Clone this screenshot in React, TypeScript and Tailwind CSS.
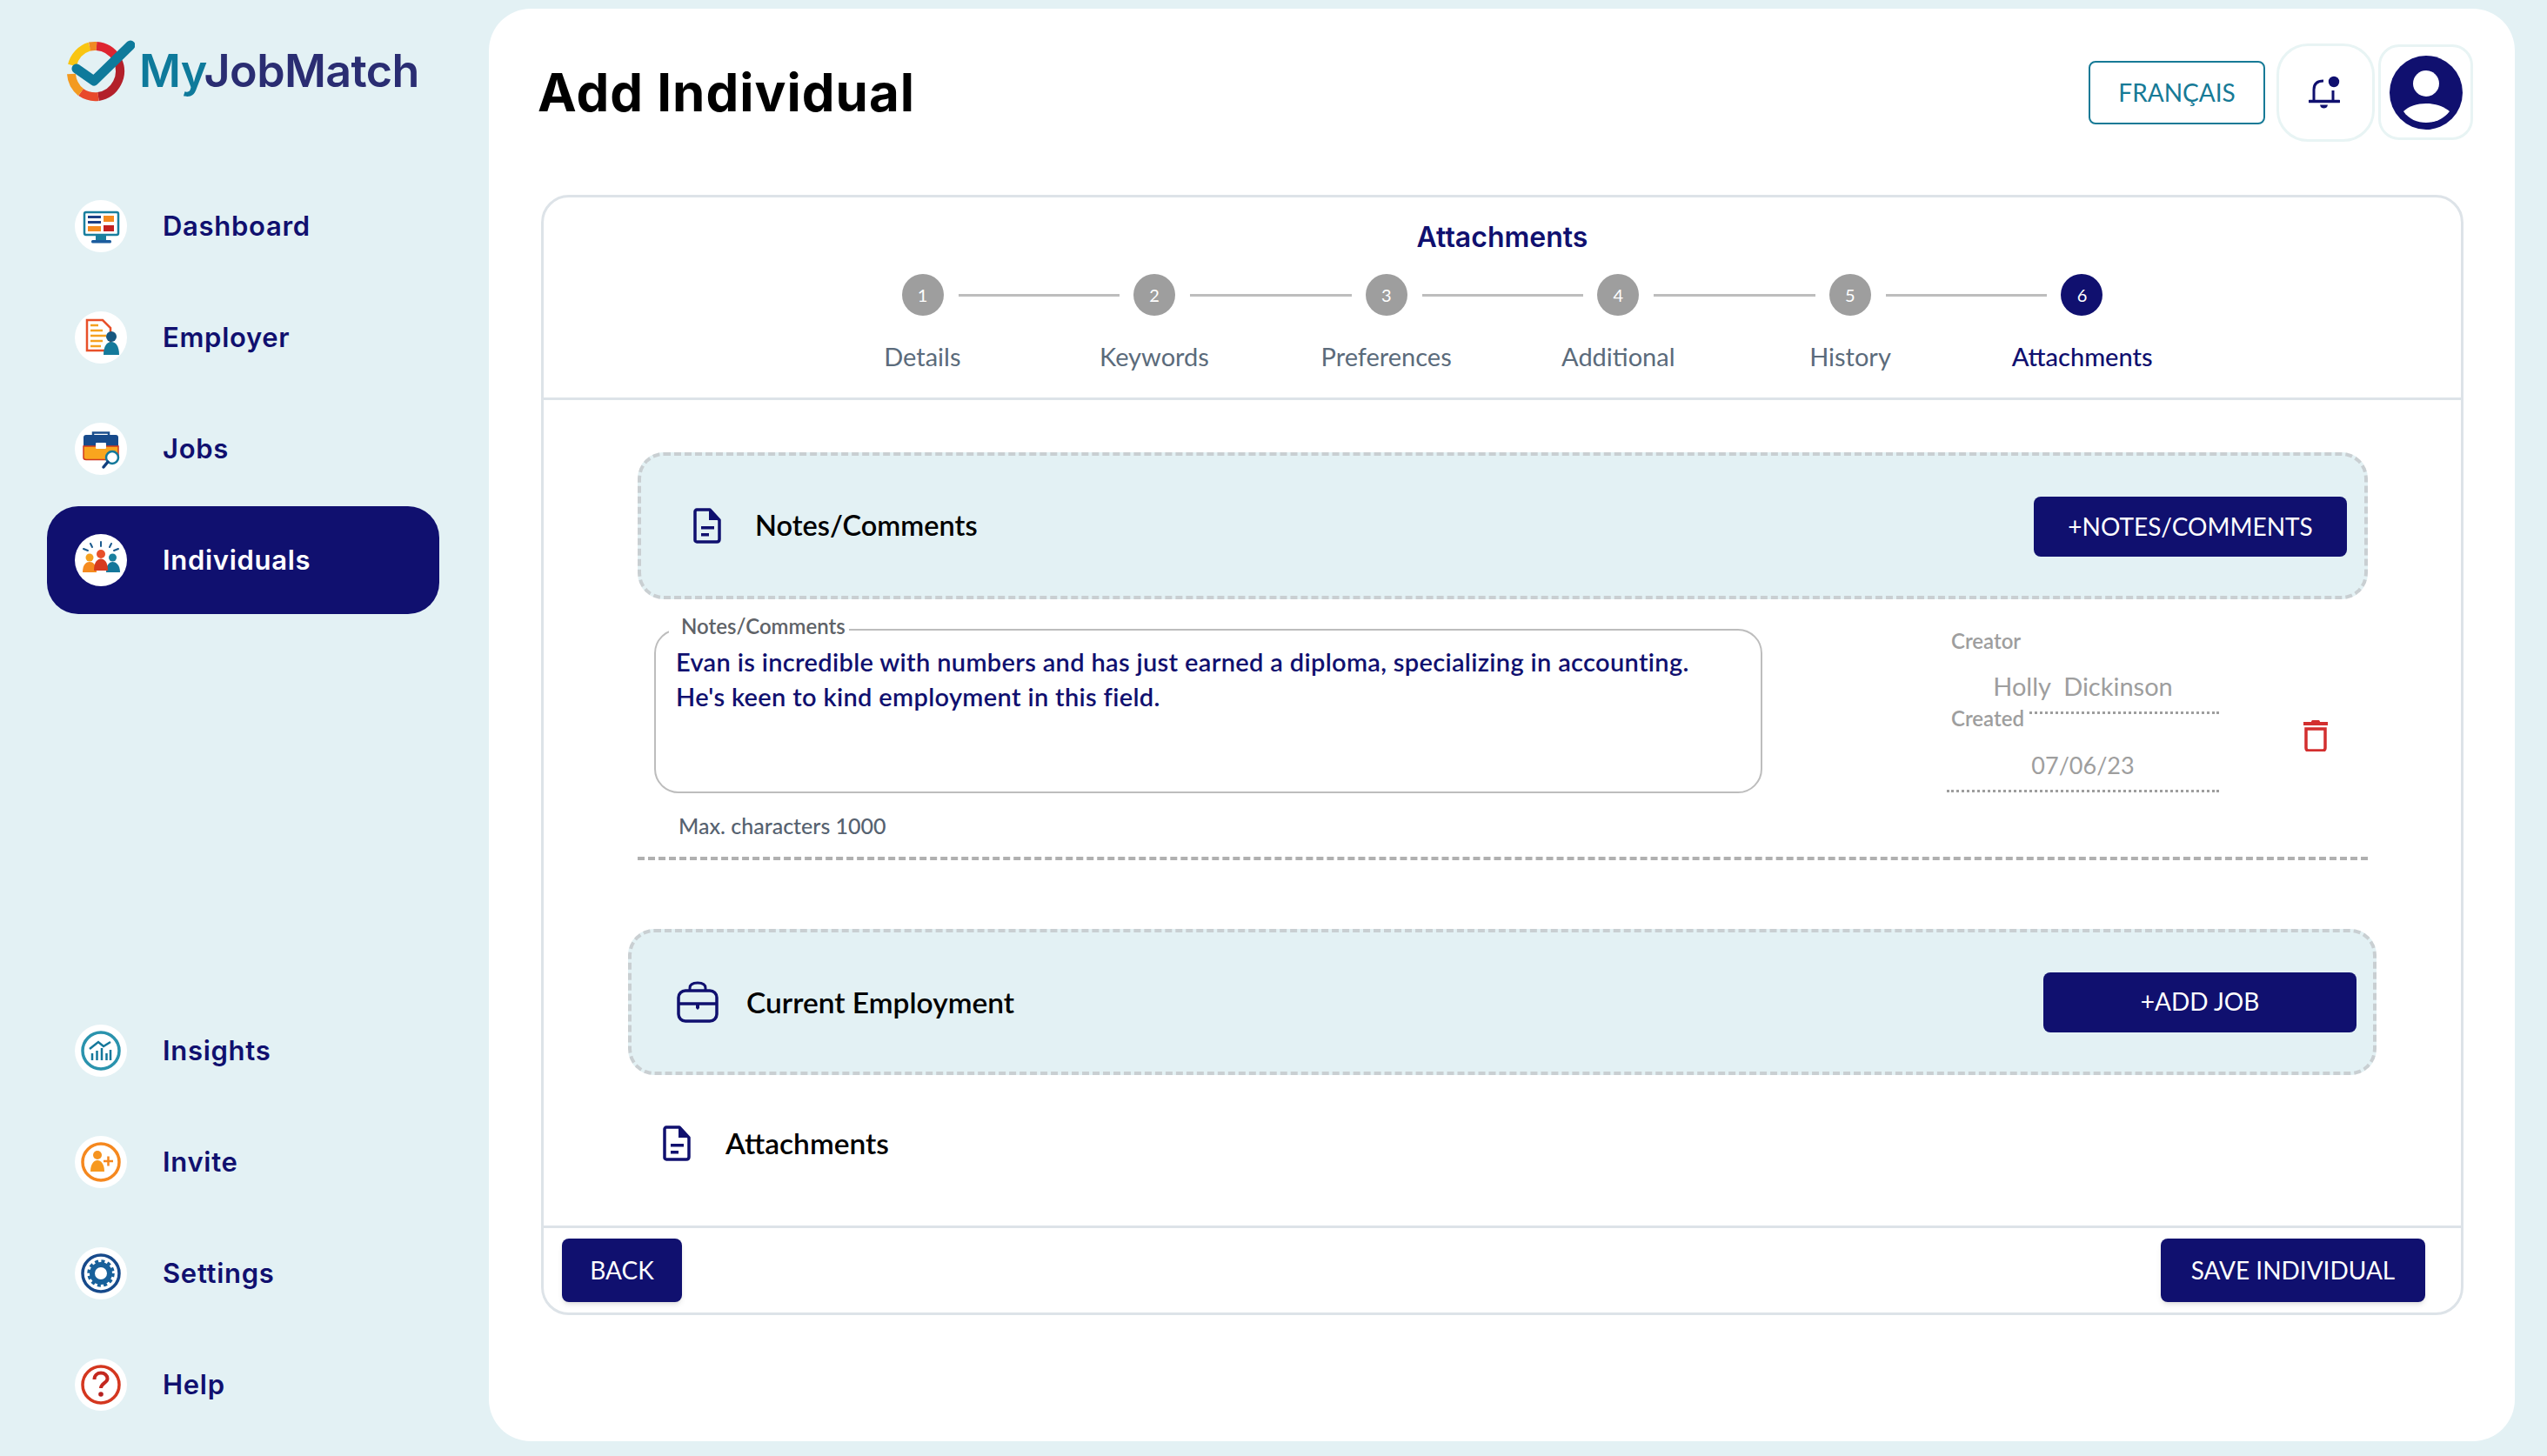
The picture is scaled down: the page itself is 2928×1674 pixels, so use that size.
import type { ReactNode } from "react";

const headFont = "font-['Inter',sans-serif]";

function DashboardIcon() {
  return (
    <svg viewBox="0 0 60 60" className="w-[60px] h-[60px]">
      <rect x="11" y="14" width="39" height="26" rx="2" fill="#fff" stroke="#1a7f9e" strokeWidth="2.5" />
      <rect x="15" y="18" width="15" height="3" fill="#1c3f86" />
      <rect x="15" y="24" width="15" height="3" fill="#1c3f86" />
      <rect x="33" y="18" width="12" height="7" fill="#f58a1f" />
      <rect x="15" y="30" width="15" height="6" fill="#f58a1f" />
      <rect x="33" y="29" width="12" height="7" fill="#c4201f" />
      <rect x="24" y="40" width="12" height="6" fill="#1a7f9e" />
      <rect x="19" y="46" width="23" height="3.5" rx="1.5" fill="#1c5c9e" />
    </svg>
  );
}

function EmployerIcon() {
  return (
    <svg viewBox="0 0 60 60" className="w-[60px] h-[60px]">
      <path d="M14 10H32L41 19V45H14Z" fill="#fff" stroke="#e8502a" strokeWidth="2.5" />
      <path d="M18 16H27M18 22H32M18 28H36M18 34H32M18 40H30" stroke="#f5a11f" strokeWidth="2.5" />
      <circle cx="42" cy="29" r="6" fill="#17577f" />
      <path d="M33 50C33 40 37 35 42 35C47 35 51 40 51 50Z" fill="#147a9b" />
    </svg>
  );
}

function JobsIcon() {
  return (
    <svg viewBox="0 0 60 60" className="w-[60px] h-[60px]">
      <path d="M21 14V11.5H39V14" fill="none" stroke="#1c4f8e" strokeWidth="2.5" />
      <path d="M10 17C10 15 11 14 13 14H47C49 14 50 15 50 17V27H10Z" fill="#174a8b" />
      <path d="M10 27H50V40C50 41.5 49 42.5 47 42.5H13C11 42.5 10 41.5 10 40Z" fill="#f9a51e" stroke="#d0391f" strokeWidth="1.5" />
      <rect x="24" y="23" width="12" height="7" rx="1" fill="#fff" />
      <circle cx="43" cy="40" r="7" fill="#fff" stroke="#12789a" strokeWidth="2.5" />
      <path d="M38 45L33 51" stroke="#123f7e" strokeWidth="3.5" strokeLinecap="round" />
    </svg>
  );
}

function IndividualsIcon() {
  return (
    <svg viewBox="0 0 60 60" className="w-[60px] h-[60px]">
      <path d="M30 9V14M18 11L20 15M42 11L40 15M10 17L15 19M50 17L45 19" stroke="#1a5a8e" strokeWidth="2" strokeLinecap="round" />
      <circle cx="17" cy="27" r="4.5" fill="#f5a11f" />
      <path d="M9 44C9 35 13 32 17 32C21 32 25 35 25 44Z" fill="#f58a1f" />
      <circle cx="43.5" cy="27" r="4.5" fill="#1a7f9e" />
      <path d="M36 44C36 35 40 32 43.5 32C47 32 52 35 52 44Z" fill="#14779a" />
      <circle cx="30" cy="23" r="5" fill="#e8502a" />
      <path d="M22 42C22 32 26 28.5 30 28.5C34 28.5 38 32 38 42Z" fill="#d63a1f" />
    </svg>
  );
}

function InsightsIcon() {
  return (
    <svg viewBox="0 0 60 60" className="w-[60px] h-[60px]">
      <circle cx="30" cy="30" r="21" fill="none" stroke="#2a93ad" strokeWidth="3.5" />
      <path d="M17 28L27 20L33 25L41 20" fill="none" stroke="#14779a" strokeWidth="2.5" />
      <path d="M20 33V41M25.5 30V41M31 27V41M36.5 33V41M41 29V41" stroke="#14779a" strokeWidth="2.5" />
    </svg>
  );
}

function InviteIcon() {
  return (
    <svg viewBox="0 0 60 60" className="w-[60px] h-[60px]">
      <circle cx="30" cy="30" r="21" fill="none" stroke="#f5881f" strokeWidth="3.5" />
      <circle cx="26" cy="22" r="5" fill="#f5931f" />
      <path d="M18 41C18 32 22 28 26 28C30 28 34 32 34 41Z" fill="#f7991f" />
      <path d="M33 29H44M38.5 23.5V34.5" stroke="#f5881f" strokeWidth="2.5" />
    </svg>
  );
}

function SettingsIcon() {
  return (
    <svg viewBox="0 0 60 60" className="w-[60px] h-[60px]">
      <circle cx="30" cy="30" r="21" fill="none" stroke="#174a8b" strokeWidth="3.5" />
      <circle cx="30" cy="30" r="10" fill="none" stroke="#17609a" strokeWidth="6" />
      <circle cx="30" cy="30" r="14" fill="none" stroke="#17609a" strokeWidth="3.5" strokeDasharray="4 3.33" />
    </svg>
  );
}

function HelpIcon() {
  return (
    <svg viewBox="0 0 60 60" className="w-[60px] h-[60px]">
      <circle cx="30" cy="30" r="21" fill="none" stroke="#d4371f" strokeWidth="3.5" />
      <path d="M22.5 24C22.5 19 26 16.5 30 16.5C34.5 16.5 37.5 19.5 37.5 23C37.5 28 30 28.5 30 34" fill="none" stroke="#c4281f" strokeWidth="4" />
      <circle cx="30" cy="41" r="2.8" fill="#b5201f" />
    </svg>
  );
}

function Logo() {
  return (
    <svg viewBox="0 0 80 72" className="w-[80px] h-[72px] shrink-0">
      <g fill="none" strokeWidth="10" transform="translate(2 1)">
        <path d="M6 28A29.5 29.5 0 0 1 26 6.5" stroke="#f9c512" />
        <path d="M26 6.5A29.5 29.5 0 0 1 34 6" stroke="#f08a24" />
        <path d="M34 6A29.5 29.5 0 0 1 57 20" stroke="#de2530" />
        <path d="M58 22A29.5 29.5 0 0 1 36 64" stroke="#b3202a" />
        <path d="M36 64A29.5 29.5 0 0 1 16 59" stroke="#e8492b" />
        <path d="M16 59A29.5 29.5 0 0 1 5 38" stroke="#f39a21" />
      </g>
      <path d="M13 33L33 47L75 6" fill="none" stroke="#0e7a9b" strokeWidth="11" strokeLinecap="round" strokeLinejoin="round" />
    </svg>
  );
}

function DocIcon({ className }: { className: string }) {
  return (
    <svg viewBox="0 0 32 41" className={className}>
      <path d="M4 2H19L30 14V36C30 38 29 39 27 39H4C3 39 2 38 2 37V4C2 3 3 2 4 2Z" fill="none" stroke="#10106f" strokeWidth="3.5" strokeLinejoin="round" />
      <path d="M18 2L30 14H18Z" fill="#10106f" />
      <rect x="9" y="21" width="15" height="3.5" fill="#10106f" />
      <rect x="9" y="29" width="9" height="3.5" fill="#10106f" />
    </svg>
  );
}

function BriefcaseIcon() {
  return (
    <svg viewBox="0 0 48 48" className="w-[48px] h-[48px] shrink-0">
      <path d="M15 11V8C15 4 18 2 24 2C30 2 33 4 33 8V11" fill="none" stroke="#10106f" strokeWidth="3" />
      <rect x="2" y="11" width="44" height="35" rx="8" fill="none" stroke="#10106f" strokeWidth="3.5" />
      <path d="M2 26H46" stroke="#10106f" strokeWidth="3.5" />
      <path d="M22 26H26V31L24 33L22 31Z" fill="#10106f" />
    </svg>
  );
}

function BellIcon() {
  return (
    <svg viewBox="0 0 36 38" className="w-[36px] h-[38px]">
      <path d="M6 28V16C6 9 10 6 17 6" fill="none" stroke="#10106f" strokeWidth="3" />
      <path d="M28 17V28" fill="none" stroke="#10106f" strokeWidth="3" />
      <path d="M1 29.5H35" stroke="#10106f" strokeWidth="3.5" strokeLinecap="round" />
      <path d="M13 33.5H22C21.5 36.5 19.5 37.5 17.5 37.5C15.5 37.5 13.5 36.5 13 33.5Z" fill="#10106f" />
      <circle cx="29" cy="7" r="6.2" fill="#10106f" />
    </svg>
  );
}

function AvatarIcon() {
  return (
    <svg viewBox="0 0 84 85" className="w-[84px] h-[85px]">
      <ellipse cx="42" cy="42.5" rx="42" ry="42.5" fill="#10106f" />
      <circle cx="42" cy="32" r="15" fill="#fff" />
      <path d="M16 64C22 58 32 55 42 55C52 55 62 58 69 64C62 73 52 77 42 77C32 77 22 73 16 64Z" fill="#fff" />
    </svg>
  );
}

function TrashIcon() {
  return (
    <svg viewBox="0 0 28 37" className="w-[28px] h-[37px]">
      <path d="M9 3C9 1.5 10 1 11 1H17C18 1 19 1.5 19 3H28V7H0V3Z" fill="#d32f2f" />
      <path d="M3 11H25V33C25 35 24 36 22 36H6C4 36 3 35 3 33Z" fill="none" stroke="#d32f2f" strokeWidth="3.5" />
    </svg>
  );
}

function NavItem({ icon, label, active }: { icon: ReactNode; label: string; active?: boolean }) {
  return (
    <div
      className={
        active
          ? "flex items-center h-[124px] w-[451px] pl-[32px] gap-[41px] rounded-[36px] bg-[#10106f] text-white"
          : "flex items-center h-[124px] w-[451px] pl-[32px] gap-[41px] text-[#10106f]"
      }
    >
      <span className="flex items-center justify-center w-[60px] h-[60px] rounded-full bg-white shrink-0">{icon}</span>
      <span className={`${headFont} text-[31px] font-semibold tracking-[0.7px]`}>{label}</span>
    </div>
  );
}

const steps = ["Details", "Keywords", "Preferences", "Additional", "History", "Attachments"];

function Stepper() {
  return (
    <div className="flex flex-col items-center">
      <div className="flex items-center">
        {steps.map((s, i) => (
          <div key={s} className="flex items-center">
            <div
              className={
                i === 5
                  ? "flex items-center justify-center w-[48px] h-[48px] rounded-full bg-[#10106f] text-white text-[20px]"
                  : "flex items-center justify-center w-[48px] h-[48px] rounded-full bg-[#9e9e9e] text-white text-[20px]"
              }
            >
              {i + 1}
            </div>
            {i < 5 && <div className="w-[185.6px] h-[3px] ml-[17px] mr-[16px] bg-[#bdbdbd]" />}
          </div>
        ))}
      </div>
      <div className="grid grid-cols-6 w-[1600px] mt-[27px]">
        {steps.map((s, i) => (
          <div
            key={s}
            className={
              i === 5
                ? "text-center text-[29px] leading-[40px] font-medium text-[#10106f]"
                : "text-center text-[29px] leading-[40px] text-[#5b6b7b]"
            }
          >
            {s}
          </div>
        ))}
      </div>
    </div>
  );
}

function PrimaryButton({ label, className }: { label: string; className: string }) {
  return (
    <button className={`flex items-center justify-center pb-[2px] bg-[#10106f] text-white text-[28px] ${className}`}>{label}</button>
  );
}

export default function App() {
  return (
    <div className="flex w-[2928px] h-[1674px] bg-[#e3f1f4] font-['Lato',sans-serif] overflow-hidden">
      <aside className="flex flex-col w-[562px] shrink-0 pl-[54px] pb-[20px]">
        <div className="flex items-center gap-[5px] h-[72px] mt-[46px] ml-[21px]">
          <Logo />
          <span className={`${headFont} text-[52px] font-semibold tracking-[-0.6px] leading-none text-[#2a2d72]`}>
            <span className="text-[#0e7a9b]">My</span>JobMatch
          </span>
        </div>
        <nav className="flex flex-col gap-[4px] mt-[80px]">
          <NavItem icon={<DashboardIcon />} label="Dashboard" />
          <NavItem icon={<EmployerIcon />} label="Employer" />
          <NavItem icon={<JobsIcon />} label="Jobs" />
          <NavItem icon={<IndividualsIcon />} label="Individuals" active />
        </nav>
        <nav className="flex flex-col gap-[4px] mt-auto">
          <NavItem icon={<InsightsIcon />} label="Insights" />
          <NavItem icon={<InviteIcon />} label="Invite" />
          <NavItem icon={<SettingsIcon />} label="Settings" />
          <NavItem icon={<HelpIcon />} label="Help" />
        </nav>
      </aside>

      <main className="flex flex-col w-[2329px] h-[1647px] mt-[10px] rounded-[48px] bg-white pl-[60px] pr-[59px]">
        <header className="flex items-center justify-between h-[192px] mb-[22px] -ml-[4px] -mr-[11px]">
          <h1 className={`${headFont} text-[60px] font-bold text-black tracking-[1px]`}>Add Individual</h1>
          <div className="flex items-center">
            <button className="flex items-center justify-center w-[203px] h-[73px] rounded-[8px] border-2 border-[#167a96] text-[#167a96] text-[28px]">
              FRANÇAIS
            </button>
            <div className="flex items-center justify-center w-[113px] h-[113px] ml-[13px] pr-[4px] rounded-[36px] border-[3px] border-[#e8f4f4]">
              <BellIcon />
            </div>
            <div className="flex items-center justify-center w-[109px] h-[110px] ml-[4px] rounded-[24px] border-[3px] border-[#e8f4f4]">
              <AvatarIcon />
            </div>
          </div>
        </header>

        <section className="flex flex-col h-[1288px] rounded-[32px] border-[3px] border-[#dde3e8]">
          <div className="flex flex-col items-center h-[233px] pt-[26px] border-b-[3px] border-[#dde3e8]">
            <h2 className={`${headFont} text-[32px] leading-[40px] font-semibold text-[#10106f]`}>Attachments</h2>
            <div className="mt-[22px]">
              <Stepper />
            </div>
          </div>

          <div className="flex flex-col flex-1">
            <div className="flex items-center justify-between h-[169px] ml-[108px] mr-[107px] mt-[60px] pl-[60px] pr-[20px] rounded-[30px] border-4 border-dashed border-[#c9cfd2] bg-[#e3f1f4]">
              <div className="flex items-center gap-[39px]">
                <DocIcon className="w-[32px] h-[41px] shrink-0" />
                <span className="text-[32.5px] font-semibold text-black">Notes/Comments</span>
              </div>
              <PrimaryButton label="+NOTES/COMMENTS" className="w-[360px] h-[69px] mt-[2px] rounded-[8px]" />
            </div>

            <div className="flex h-[296px] pl-[127px]">
              <div className="w-[1274px] pt-[21px]">
                <fieldset className="h-[202px] rounded-[28px] border-[2.5px] border-[#bdbdbd] pl-[23px]">
                  <legend className="-ml-[8px] pl-[14px] pr-[4px] -translate-y-[4px] text-[24px] leading-[28px] font-semibold text-[#5f6368]">Notes/Comments</legend>
                  <p className="pt-[3px] text-[29px] tracking-[0.33px] leading-[40px] font-semibold text-[#10106f]">
                    Evan is incredible with numbers and has just earned a diploma, specializing in accounting.
                    <br />
                    He's keen to kind employment in this field.
                  </p>
                </fieldset>
                <p className="ml-[28px] mt-[21px] text-[25px] leading-[32px] font-medium text-[#566270]">Max. characters 1000</p>
              </div>
              <div className="w-[313px] ml-[212px] pt-[34px] text-[#9e9e9e]">
                <div className="h-[98px] border-b-[3px] border-dotted border-[#9e9e9e]">
                  <p className="pl-[5px] text-[24px] leading-[28px] font-semibold">Creator</p>
                  <p className="mt-[20px] text-center text-[29px] leading-[36px]">Holly&nbsp; Dickinson</p>
                </div>
                <p className="w-fit -mt-[9px] pl-[5px] pr-[6px] bg-white text-[24px] leading-[28px] font-semibold">Created</p>
                <div className="h-[71px] border-b-[3px] border-dotted border-[#9e9e9e]">
                  <p className="pt-[22px] text-center text-[27px] leading-[36px]">07/06/23</p>
                </div>
              </div>
              <div className="ml-[97px] mt-[138px]">
                <TrashIcon />
              </div>
            </div>

            <div className="ml-[108px] mr-[107px] border-t-4 border-dashed border-[#b0b0b0]" />

            <div className="flex items-center justify-between h-[168px] mx-[97px] mt-[79px] pl-[52px] pr-[19px] rounded-[30px] border-4 border-dashed border-[#c9cfd2] bg-[#e3f1f4]">
              <div className="flex items-center gap-[32px]">
                <BriefcaseIcon />
                <span className="text-[33.5px] font-semibold text-black">Current Employment</span>
              </div>
              <PrimaryButton label="+ADD JOB" className="w-[360px] h-[69px] rounded-[8px]" />
            </div>

            <div className="flex items-center gap-[40px] pl-[137px] mt-[53px]">
              <DocIcon className="w-[32px] h-[41px] shrink-0" />
              <span className="text-[33.5px] font-semibold text-black">Attachments</span>
            </div>
          </div>

          <footer className="flex items-center justify-between h-[100px] pl-[21px] pr-[41px] border-t-[3px] border-[#dde3e8]">
            <PrimaryButton label="BACK" className="w-[138px] h-[73px] rounded-[8px] shadow-md" />
            <PrimaryButton label="SAVE INDIVIDUAL" className="w-[304px] h-[73px] rounded-[8px] shadow-md" />
          </footer>
        </section>
      </main>
    </div>
  );
}
